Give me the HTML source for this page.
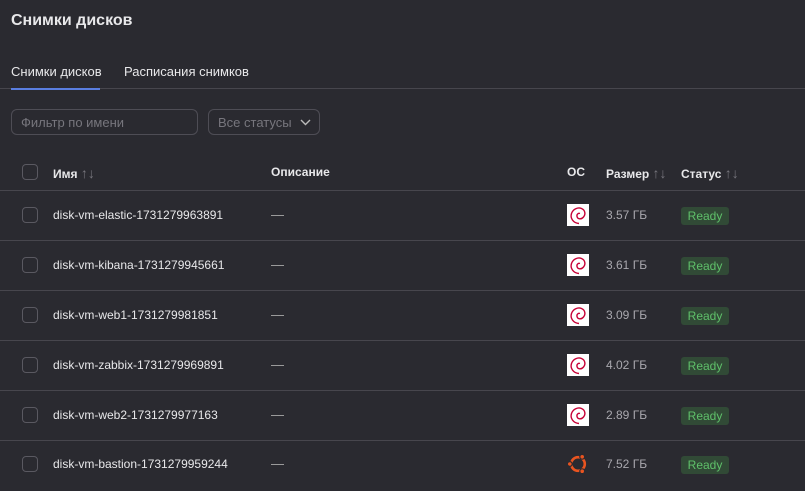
<!DOCTYPE html>
<html><head><meta charset="utf-8"><style>
*{box-sizing:border-box;margin:0;padding:0}
body{width:805px;height:491px;overflow:hidden;background:#2a2a30;font-family:"Liberation Sans","Noto Sans CJK SC",sans-serif;color:#e8e8ea;position:relative;font-size:13px}
.a{position:absolute;white-space:nowrap}
.title{left:11px;top:12px;font-size:16px;font-weight:bold}
.tab{top:64px;font-size:13px}
.line{position:absolute;left:0;width:805px;height:1px;background:#47464d}
.inp{position:absolute;border:1px solid #4e4d55;border-radius:6px;height:26px;top:109px;color:#77767d;font-size:13px;padding:5px 9px}
.cb{position:absolute;left:22px;width:16px;height:16px;border:1px solid #5a5961;border-radius:4px}
.h{font-weight:bold;top:165px;font-size:12px}
.arr{color:#77767d;font-weight:normal;font-size:14px}
.nm{left:53px;font-size:12px}
.ds{left:271px;color:#aaa}
.os{position:absolute;left:567px;width:22px;height:22px;background:#fff}
.sz{left:606px;color:#a9a8ae;font-size:12px}
.rd{position:absolute;left:681px;width:48px;height:18px;background:#314a36;color:#5fc06a;border-radius:3px;font-size:12px;text-align:center;line-height:18px}
</style></head><body>
<div class="a title">Снимки дисков</div>
<div class="a tab" style="left:11px">Снимки дисков</div>
<div class="a tab" style="left:124px">Расписания снимков</div>
<div class="line" style="top:88px"></div>
<div style="position:absolute;left:11px;top:88px;width:89px;height:2px;background:#5a7ee0"></div>
<div class="inp" style="left:11px;width:187px">Фильтр по имени</div>
<div class="inp" style="left:208px;width:112px">Все статусы<svg style="position:absolute;right:8px;top:9px" width="11" height="7" viewBox="0 0 11 7"><path d="M1 1l4.5 4.5L10 1" stroke="#bbb" stroke-width="1.4" fill="none"/></svg></div>
<div class="cb" style="top:164px"></div>
<div class="a h" style="left:53px">Имя <span class="arr">↑↓</span></div>
<div class="a h" style="left:271px">Описание</div>
<div class="a h" style="left:567px">ОС</div>
<div class="a h" style="left:606px">Размер <span class="arr">↑↓</span></div>
<div class="a h" style="left:681px">Статус <span class="arr">↑↓</span></div>
<div class="line" style="top:190px"></div>

<div id="rows"></div>
<script>
var d=[["disk-vm-elastic-1731279963891","3.57"],["disk-vm-kibana-1731279945661","3.61"],["disk-vm-web1-1731279981851","3.09"],["disk-vm-zabbix-1731279969891","4.02"],["disk-vm-web2-1731279977163","2.89"],["disk-vm-bastion-1731279959244","7.52"]];
var h="";
var deb='<svg width="22" height="22" viewBox="0 0 22 22"><path d="M12 19.5C6 19 3 14 4.5 9.5S11 3 14.5 4.5 19 10 16.5 13s-6 2-6.5-.5 1.5-3.5 3-3" stroke="#c70036" stroke-width="1.4" fill="none"/></svg>';
var ub='<svg width="24" height="24" viewBox="0 0 24 24" style="margin:-1px"><circle cx="12" cy="12" r="6.8" stroke="#e95420" stroke-width="2.6" fill="none"/><circle cx="3.8" cy="12" r="2.4" fill="#e95420" stroke="#2a2a30" stroke-width="1.2"/><circle cx="16.2" cy="4.8" r="2.4" fill="#e95420" stroke="#2a2a30" stroke-width="1.2"/><circle cx="16.2" cy="19.2" r="2.4" fill="#e95420" stroke="#2a2a30" stroke-width="1.2"/></svg>';
for(var i=0;i<6;i++){var c=215+50*i-(i==5?1:0);
h+='<div class="cb" style="top:'+(c-8)+'px"></div><div class="a nm" style="top:'+(c-7)+'px">'+d[i][0]+'</div><div class="a ds" style="top:'+(c-8)+'px">—</div>';
h+=(i<5?'<div class="os" style="top:'+(c-11)+'px">'+deb+'</div>':'<div class="os" style="top:'+(c-11)+'px;background:none">'+ub+'</div>');
h+='<div class="a sz" style="top:'+(c-7)+'px">'+d[i][1]+' ГБ</div><div class="rd" style="top:'+(c-8)+'px">Ready</div>';
if(i<5)h+='<div class="line" style="top:'+(c+25)+'px"></div>';}
document.getElementById("rows").innerHTML=h;
</script>
</body></html>
